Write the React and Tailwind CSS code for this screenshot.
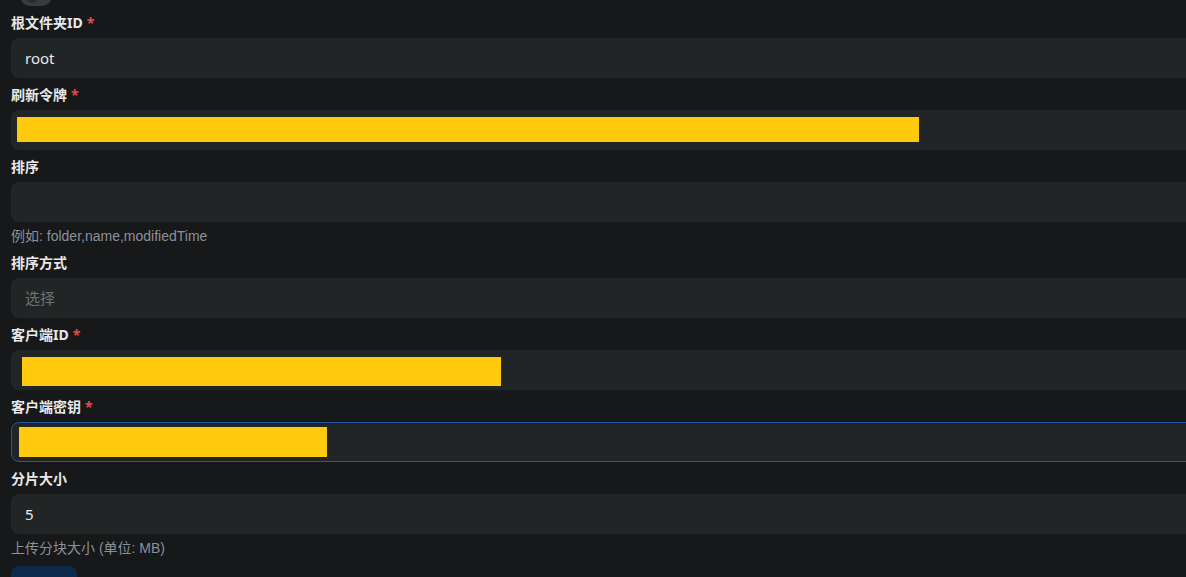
import React from 'react';

const font = { fontFamily: '"Noto Sans", "Noto Sans CJK SC", sans-serif' };

function Field({ label, required, help, children }) {
    return (
        <div className="mb-[7px]">
            <div className="h-5 mb-[5px] flex items-center text-[14px] font-bold text-[#e8e8e8] leading-5">
                {label}
                {required && <span className="ml-1 text-[#e5484d]">*</span>}
            </div>
            {children}
            {help && (
                <div className="mt-1 h-5 leading-5 text-[14px] text-[#8b9198] font-['Liberation_Sans','Noto_Sans_CJK_SC',sans-serif]">
                    {help}
                </div>
            )}
        </div>
    );
}

function Box({ focused, children }) {
    return (
        <div className={`h-10 rounded-lg bg-[#222526] flex items-center ${focused ? 'border border-[#1f5a9e]' : ''}`}>
            {children}
        </div>
    );
}

export default function App() {
    return (
        <div className="w-screen h-[577px] overflow-hidden bg-[#17181a]" style={font}>
            <div className="w-[1220px] pl-[11px]">
                <div className="h-[6px] relative mb-[7px]">
                    <div className="absolute left-[9px] -top-[14px] w-8 h-5 rounded-full bg-[#393b3e]">
                        <div className="absolute left-[5px] top-[3px] w-[14px] h-[14px] rounded-full bg-[#2a2c2e]" />
                    </div>
                </div>

                <Field label="根文件夹ID" required>
                    <Box><span className="pl-[14px] text-[15px] text-[#e8e8e8]">root</span></Box>
                </Field>

                <Field label="刷新令牌" required>
                    <Box><div className="ml-[6px] -mt-px w-[902px] h-[25px] bg-[#ffc90e]" /></Box>
                </Field>

                <Field label="排序" help="例如: folder,name,modifiedTime">
                    <Box />
                </Field>

                <Field label="排序方式">
                    <Box><span className="pl-[14px] text-[15px] text-[#6e7378]">选择</span></Box>
                </Field>

                <Field label="客户端ID" required>
                    <Box><div className="ml-[11px] mt-[3px] w-[479px] h-[29px] bg-[#ffc90e]" /></Box>
                </Field>

                <Field label="客户端密钥" required>
                    <Box focused><div className="ml-[7px] w-[308px] h-[30px] bg-[#ffc90e]" /></Box>
                </Field>

                <Field label="分片大小" help="上传分块大小 (单位: MB)">
                    <Box><span className="pl-[14px] text-[15px] text-[#e8e8e8]">5</span></Box>
                </Field>

                <button className="mt-px w-[66px] h-9 rounded-lg bg-[#0e2a4a]" />
            </div>
        </div>
    );
}
